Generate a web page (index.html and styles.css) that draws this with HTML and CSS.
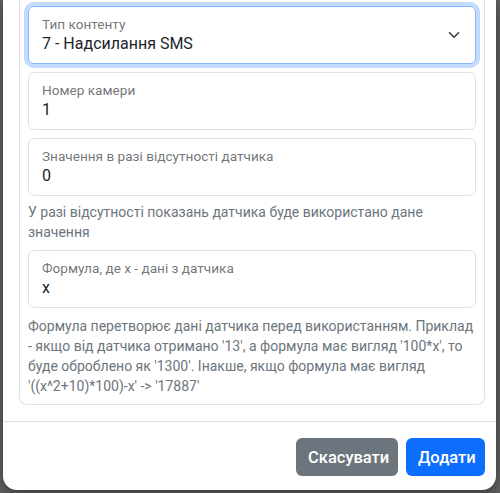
FILE: index.html
```html
<!DOCTYPE html>
<html lang="uk">
<head>
    <meta charset="UTF-8">
    <meta name="viewport" content="width=device-width, initial-scale=1.0">
    <title>Додати джерело</title>
    <link rel="stylesheet" href="styles.css">
</head>
<body>
    <div class="modal">
        <div class="modal-body">
            <div class="card">
                <div class="field field-select focused">
                    <div class="field-text">
                        <label>Тип контенту</label>
                        <div class="value">7 - Надсилання SMS</div>
                    </div>
                    <svg class="chevron" width="16" height="12" viewBox="0 0 16 16">
                        <path d="m2 5 6 6 6-6" fill="none" stroke="#343a40" stroke-width="2" stroke-linecap="round" stroke-linejoin="round"/>
                    </svg>
                </div>
                <div class="field">
                    <div class="field-text">
                        <label>Номер камери</label>
                        <div class="value">1</div>
                    </div>
                </div>
                <div class="field">
                    <div class="field-text">
                        <label>Значення в разі відсутності датчика</label>
                        <div class="value">0</div>
                    </div>
                </div>
                <div class="form-text">У разі відсутності показань датчика буде використано дане значення</div>
                <div class="field">
                    <div class="field-text">
                        <label>Формула, де x - дані з датчика</label>
                        <div class="value">x</div>
                    </div>
                </div>
                <div class="form-text">Формула перетворює дані датчика перед використанням. Приклад - якщо від датчика отримано '13', а формула має вигляд '100*x', то буде оброблено як '1300'. Інакше, якщо формула має вигляд '((x^2+10)*100)-x' -&gt; '17887'</div>
            </div>
        </div>
        <div class="modal-footer">
            <button class="btn btn-secondary">Скасувати</button>
            <button class="btn btn-primary">Додати</button>
        </div>
    </div>
</body>
</html>
```

FILE: styles.css
```css
body {
    margin: 0;
    height: 493px;
    overflow: hidden;
    background: #5e5e5e;
    font-family: 'Roboto', 'Noto Sans', sans-serif;
    color: #212529;
}
.modal {
    width: 493px;
    margin-left: 3px;
    background: #fff;
    border-radius: 0 0 14px 14px;
    box-shadow: 0 4px 10px rgba(0, 0, 0, 0.35);
}
.modal-body {
    padding: 0 11px 16px 16px;
}
.card {
    border: 1px solid #dee2e6;
    border-top: none;
    border-radius: 0 0 8px 8px;
    padding: 6px 8px 8px;
}
.field {
    display: flex;
    align-items: center;
    height: 58px;
    box-sizing: border-box;
    border: 1px solid #dee2e6;
    border-radius: 6px;
    padding: 0 12px 0 13px;
    margin-bottom: 8px;
}
.field.focused {
    border-color: #86b7fe;
    box-shadow: 0 0 0 4px rgba(13, 110, 253, 0.25);
}
.field-text {
    flex: 1;
    display: flex;
    flex-direction: column;
    padding-top: 4px;
}
.field label {
    font-size: 13.6px;
    line-height: 16px;
    color: rgba(33, 37, 41, 0.65);
    margin-top: -2px;
}
.field .value {
    font-size: 16px;
    line-height: 24px;
}
.chevron {
    margin-right: 1px;
}
.form-text {
    font-size: 14px;
    line-height: 20px;
    color: #6c757d;
    margin: -2px 0 8px;
}
.form-text:last-child {
    margin-bottom: 0;
    margin-top: 2px;
}
.modal-footer {
    display: flex;
    justify-content: flex-end;
    gap: 8px;
    border-top: 1px solid #dee2e6;
    padding: 16px 11px 14px;
}
.btn {
    font-family: inherit;
    font-size: 16.5px;
    font-weight: 500;
    height: 38px;
    padding: 0 12px;
    border: none;
    border-radius: 6px;
    color: #fff;
    cursor: pointer;
}
.btn-secondary {
    background: #6c757d;
    width: 102px;
}
.btn-primary {
    background: #0d6efd;
    width: 79px;
}
```
